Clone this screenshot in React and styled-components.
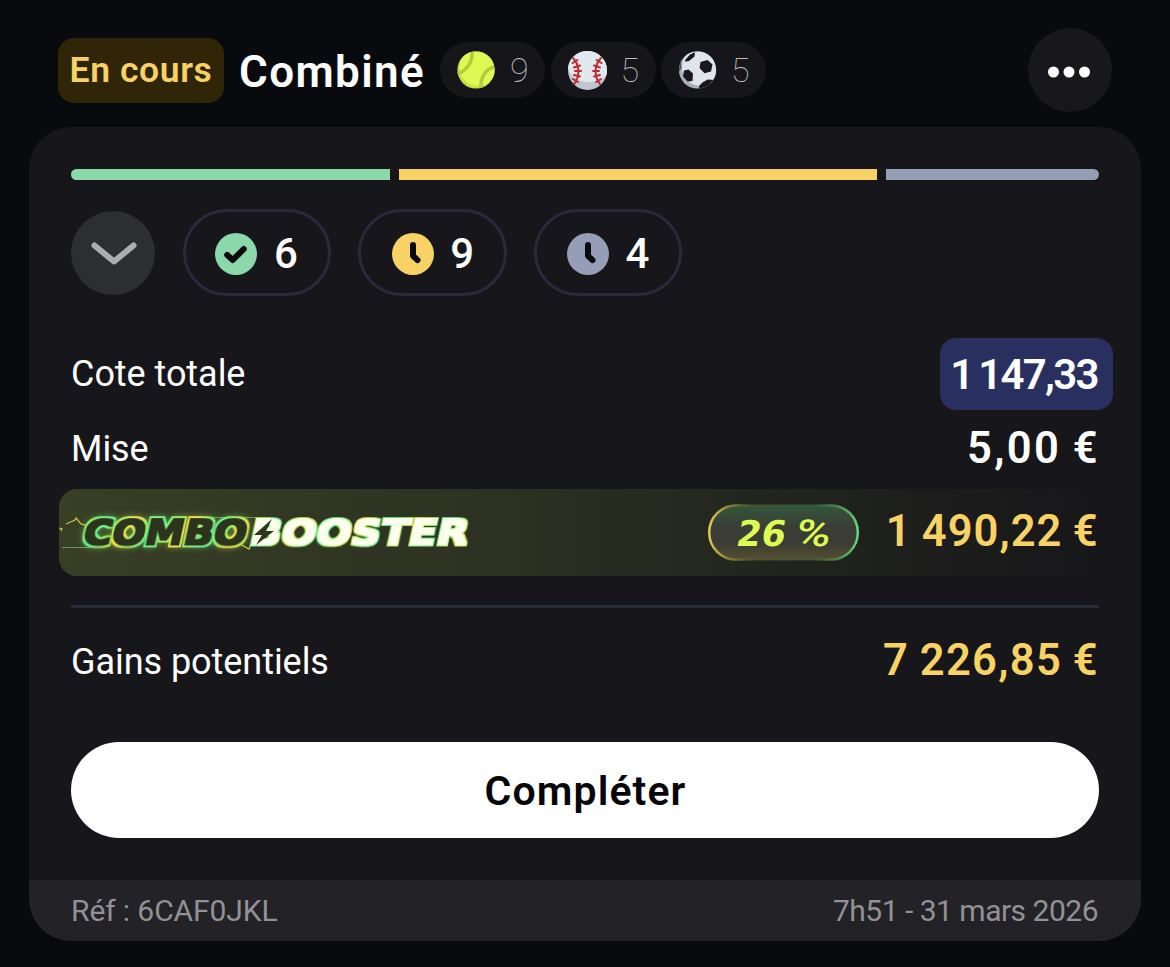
import React from "react";
import styled, { createGlobalStyle } from "styled-components";

const Global = createGlobalStyle`
  *, *::before, *::after { box-sizing: border-box; }
  body { margin: 0; background: #090a0d; font-family: Roboto, "Liberation Sans", sans-serif; color: #fff; }
`;

const Page = styled.main`
  width: 1170px;
  height: 967px;
  overflow: hidden;
  padding: 28px 29px 0;
`;

const Header = styled.header`
  display: flex;
  align-items: center;
  height: 84px;
  padding: 0 29px;
  margin-bottom: 15px;
`;

const Status = styled.span`
  display: flex;
  align-items: center;
  justify-content: center;
  width: 166px;
  height: 65px;
  border-radius: 16px;
  background: #312508;
  color: #f8d264;
  font-size: 35.5px;
  font-weight: 600;
  letter-spacing: 0.6px;
  white-space: nowrap;
`;

const Title = styled.h1`
  margin: 0 0 0 15px;
  padding-top: 3px;
  width: 186px;
  font-size: 44px;
  font-weight: 600;
  line-height: 84px;
  letter-spacing: 1.4px;
  white-space: nowrap;
`;

const Sports = styled.div`
  display: flex;
  gap: 5.5px;
  margin: 0 auto 0 15px;
`;

const Sport = styled.div`
  display: flex;
  align-items: center;
  gap: 14px;
  width: 105px;
  height: 56px;
  padding-left: 16px;
  border-radius: 28px;
  background: #161519;
  color: #bcbcc0;
  font-size: 34px;
  font-weight: 100;
`;

const More = styled.button`
  display: grid;
  place-items: center;
  width: 84px;
  height: 84px;
  padding: 3px 2px 0 0;
  border: 0;
  border-radius: 50%;
  background: #18171c;
`;

const Card = styled.section`
  display: flex;
  flex-direction: column;
  width: 1112px;
  height: 814px;
  border-radius: 42px;
  background: #17161a;
  overflow: hidden;
`;

const Content = styled.div`
  flex: 1;
  padding: 42px 42px 0;
`;

const Progress = styled.div`
  display: flex;
  gap: 9px;
  height: 11px;
  border-radius: 6px;
  overflow: hidden;
`;

const Segment = styled.div`
  flex: ${(p) => p.$share} 0 0;
  background: ${(p) => p.$color};
`;

const Counters = styled.div`
  display: flex;
  align-items: center;
  margin-top: 29px;
  gap: 27px;
`;

const Toggle = styled.button`
  display: grid;
  place-items: center;
  width: 84px;
  height: 84px;
  margin-right: 1px;
  padding: 2px 0 0 1px;
  border: 0;
  border-radius: 50%;
  background: #2d2e32;
`;

const Counter = styled.div`
  display: flex;
  align-items: center;
  gap: ${(p) => p.$gap || 17}px;
  width: 148.3px;
  height: 87px;
  padding: 2px 0 0 ${(p) => p.$inset || 29}px;
  border: 3px solid #2a2b3a;
  border-radius: 44px;
  font-size: 42px;
  font-weight: 480;
`;

const Line = styled.div`
  display: flex;
  align-items: center;
  justify-content: space-between;
  height: ${(p) => p.$height}px;
  margin-top: ${(p) => p.$top || 0}px;
`;

const Label = styled.span`
  padding-top: ${(p) => p.$drop || 0}px;
  font-size: 36px;
  font-weight: 380;
  letter-spacing: -0.05px;
  white-space: nowrap;
`;

const Amount = styled.span`
  color: ${(p) => (p.$gold ? "#f8d264" : "#fff")};
  font-size: 43.5px;
  font-weight: 580;
  letter-spacing: ${(p) => p.$tracking || 0}px;
  word-spacing: -1.5px;
  margin-right: ${(p) => 1.5 - (p.$tracking || 0)}px;
  padding-bottom: ${(p) => p.$lift || 0}px;
  white-space: nowrap;
`;

const Odds = styled.span`
  display: flex;
  align-items: center;
  justify-content: center;
  width: 173px;
  height: 72px;
  margin-right: -14px;
  padding: 1px 5px 0 0;
  border-radius: 16px;
  background: #29305f;
  font-size: 42px;
  font-weight: 580;
  letter-spacing: -1.7px;
  word-spacing: -3px;
  white-space: nowrap;
`;

const Boost = styled.div`
  display: flex;
  align-items: center;
  height: 87px;
  margin: 3px 0 0 -12px;
  border-radius: 18px;
  background: linear-gradient(90deg, #383f25 0%, #2b3021 45%, #22251e 68%, #17161a 100%);
`;

const Percent = styled.span`
  display: flex;
  margin-left: auto;
  width: 178px;
`;

const BoostAmount = styled.span`
  display: flex;
  justify-content: flex-end;
  width: 213px;
`;

const Divider = styled.hr`
  height: 3px;
  margin: 29px 0 0;
  border: 0;
  background: #292a39;
`;

const Complete = styled.button`
  display: block;
  width: 100%;
  height: 96px;
  margin-top: 36px;
  padding: 2px 0 0 1px;
  border: 0;
  border-radius: 48px;
  background: #fff;
  color: #060608;
  font-family: inherit;
  font-size: 41px;
  font-weight: 600;
  letter-spacing: 1.1px;
`;

const Footer = styled.footer`
  display: flex;
  align-items: center;
  justify-content: space-between;
  height: 61px;
  padding: 0 43px 0 42px;
  background: #232226;
  color: #929195;
  font-size: 30px;
  font-weight: 380;
`;

const FootText = styled.span`
  letter-spacing: ${(p) => p.$tracking || 0}px;
`;

const TennisBall = () => (
  <svg width="40" height="40" viewBox="0 0 40 40">
    <clipPath id="tennis"><circle cx="20" cy="20" r="18.6" /></clipPath>
    <g clipPath="url(#tennis)">
      <rect width="40" height="40" fill="#c9e044" />
      <circle cx="22" cy="17.5" r="18.5" fill="#def953" />
      <path d="M16 0c1 12-5 21-15 24M39 17C30 18 24 27 25 40" fill="none" stroke="#b4cb3c" strokeWidth="3.6" />
    </g>
  </svg>
);

const Baseball = () => (
  <svg width="40" height="40" viewBox="0 0 40 40">
    <circle cx="20.5" cy="20.5" r="19.5" fill="#bfc6cf" />
    <path d="M40 20.5C40 9.500 31 1 20.500 1 10 1 2 8 1 17.500 3 27 11 32 21 32c8 0 15-2 18.500-7 .4-2 .5-3 .5-4.500z" fill="#e1e8ee" />
    <g fill="none" stroke="#bd2a30" strokeWidth="2" strokeLinecap="round">
      <path d="M6 8c7 7 7 19 1 26M34 8c-7 7-7 19-1 26" />
      <path d="M5.500 13l5-3M7 17.500l6-2M8 21h6M7 25l6 1.500M6 29l5 3M34.500 13l-5-3M33 17.500l-6-2M26 21h6M33 25l-6 1.500M34 29l-5 3" />
    </g>
  </svg>
);

const Football = () => (
  <svg width="40" height="40" viewBox="0 0 40 40">
    <clipPath id="football"><circle cx="20.5" cy="20" r="18.6" /></clipPath>
    <g clipPath="url(#football)">
      <rect width="40" height="40" fill="#a9b0b8" />
      <ellipse cx="24" cy="17" rx="19" ry="19" fill="#dfe5eb" />
      <g fill="#18191d">
        <path d="M8.500 9.500l4.500-5 5-2.200-.5 4.200-5.500 4.500-4 .8z" />
        <path d="M23.500 12l7-2 5 4.500-1.500 7-6.500 1.800-5-5.300z" />
        <path d="M7 20.500l4.500-1 4.500 4-.5 7.500-5 .5-4.500-5z" />
        <path d="M25.500 32.500l5-3 7 .5-4 8-11 2-.5-4z" />
      </g>
      <path d="M2 15l2-3 .5 6L2 22z" fill="#555960" />
    </g>
  </svg>
);

const StateIcon = ({ color, check }) => (
  <svg width="42" height="42" viewBox="0 0 42 42">
    <circle cx="21" cy="21" r="21" fill={color} />
    <path
      d={check ? "M12.200 22l5.600 5L28.800 16" : "M21 12v10.800l4.500 4.300"}
      fill="none" stroke="#0b0a0f" strokeWidth="6" strokeLinecap="round" strokeLinejoin="round"
    />
  </svg>
);

const BoosterLogo = () => (
  <svg width="420" height="66" viewBox="59 500 420 66" fontFamily="'DejaVu Sans', sans-serif" fontWeight="700">
    <defs>
      <linearGradient id="edge" x1="0" y1="0" x2="20" y2="13" gradientUnits="userSpaceOnUse" spreadMethod="reflect">
        <stop offset="0" stopColor="#eee04a" />
        <stop offset=".4" stopColor="#9dec58" />
        <stop offset="1" stopColor="#5cf08f" />
      </linearGradient>
      <filter id="comboEdge" x="-10%" y="-50%" width="120%" height="200%" colorInterpolationFilters="sRGB">
        <feMorphology in="SourceGraphic" operator="dilate" radius="3" result="wide" />
        <feGaussianBlur in="wide" stdDeviation=".4" result="outer" />
        <feMorphology in="SourceAlpha" operator="dilate" radius="1" result="inner" />
        <feFlood floodColor="#2c341d" />
        <feComposite in2="inner" operator="in" result="body" />
        <feGaussianBlur in="wide" stdDeviation="3" result="blur" />
        <feComponentTransfer in="blur" result="glow"><feFuncA type="linear" slope=".45" /></feComponentTransfer>
        <feMerge><feMergeNode in="glow" /><feMergeNode in="outer" /><feMergeNode in="body" /></feMerge>
      </filter>
      <filter id="boosterEdge" x="-10%" y="-50%" width="120%" height="200%" colorInterpolationFilters="sRGB">
        <feMorphology in="SourceGraphic" operator="dilate" radius="2" result="outer" />
        <feMorphology in="SourceAlpha" operator="dilate" radius="1" result="inner" />
        <feFlood floodColor="#fbffec" />
        <feComposite in2="inner" operator="in" result="body" />
        <feMerge><feMergeNode in="outer" /><feMergeNode in="body" /></feMerge>
      </filter>
    </defs>
    <path d="M59 528l3 1-1 2M66 524l9-4 1-2 5 6 4 1M240 544l9 5 5-12" fill="none" stroke="#c3c245" strokeWidth="1.300" />
    <path d="M62 547.500h28M190 517.500h66" fill="none" stroke="#5c9a4c" strokeWidth="1" />
    <g transform="translate(0 545.500) skewX(-12)">
      <text x="81.500" y="-.5" fontSize="35.500" textLength="163" lengthAdjust="spacingAndGlyphs" fill="url(#edge)" filter="url(#comboEdge)">COMBO</text>
      <text x="248" y="-1" fontSize="34" textLength="218" lengthAdjust="spacingAndGlyphs" fill="url(#edge)" filter="url(#boosterEdge)">BOOSTER</text>
    </g>
    <path d="M272 519l-18 16h8l-6 10 18-14h-8z" fill="#2d3620" />
  </svg>
);

const PercentBadge = () => (
  <svg width="151" height="57" viewBox="0 0 151 57" fontFamily="'DejaVu Sans', sans-serif" fontWeight="700">
    <defs>
      <linearGradient id="pillFill" x1="0" y1="0" x2="0" y2="1">
        <stop offset="0" stopColor="#34573a" /><stop offset=".4" stopColor="#3b3d37" />
        <stop offset=".7" stopColor="#3b3c34" /><stop offset="1" stopColor="#55502f" />
      </linearGradient>
      <linearGradient id="pillEdge" x1="0" y1="0" x2="1" y2="0">
        <stop offset="0" stopColor="#e8cd50" /><stop offset=".3" stopColor="#69632f" stopOpacity=".3" />
        <stop offset=".7" stopColor="#3c7548" stopOpacity=".3" /><stop offset="1" stopColor="#68dc7d" />
      </linearGradient>
    </defs>
    <rect x="1.200" y="1.200" width="148.600" height="54.600" rx="27.300" fill="url(#pillFill)" stroke="url(#pillEdge)" strokeWidth="2.400" />
    <g transform="translate(0 42) skewX(-10)" fill="#dcfb53">
      <text x="27" y="0" fontSize="35.500" textLength="49" lengthAdjust="spacingAndGlyphs">26</text>
      <text x="86" y="0" fontSize="37" fontWeight="500" fontFamily="Roboto, sans-serif" textLength="35" lengthAdjust="spacingAndGlyphs">%</text>
    </g>
  </svg>
);

export default function App() {
  return (
    <Page>
      <Global />
      <Header>
        <Status>En cours</Status>
        <Title>Combiné</Title>
        <Sports>
          <Sport><TennisBall />9</Sport>
          <Sport><Baseball />5</Sport>
          <Sport><Football />5</Sport>
        </Sports>
        <More aria-label="Options">
          <svg width="44" height="12" viewBox="0 0 44 12" fill="#fff">
            <circle cx="6.500" cy="6" r="5.500" /><circle cx="22" cy="6" r="5.500" /><circle cx="37.500" cy="6" r="5.500" />
          </svg>
        </More>
      </Header>
      <Card>
        <Content>
          <Progress>
            <Segment $share={319} $color="#8bd9ab" />
            <Segment $share={478} $color="#f8d264" />
            <Segment $share={213} $color="#969db7" />
          </Progress>
          <Counters>
            <Toggle aria-label="Afficher">
              <svg width="48" height="26" viewBox="0 0 48 26">
                <path d="M4.500 4.500L24 20.500l19.500-16" fill="none" stroke="#adadb1" strokeWidth="6" strokeLinecap="round" strokeLinejoin="round" />
              </svg>
            </Toggle>
            <Counter><StateIcon color="#8bd9ab" check />6</Counter>
            <Counter $inset={31} $gap={16}><StateIcon color="#f8d264" />9</Counter>
            <Counter $inset={30}><StateIcon color="#969db7" />4</Counter>
          </Counters>
          <Line $height={72} $top={42}><Label>Cote totale</Label><Odds>1 147,33</Odds></Line>
          <Line $height={76}><Label $drop={2}>Mise</Label><Amount $tracking={2.3}>5,00 €</Amount></Line>
          <Boost>
            <BoosterLogo />
            <Percent><PercentBadge /></Percent>
            <BoostAmount><Amount $gold $tracking={1} $lift={3}>1 490,22 €</Amount></BoostAmount>
          </Boost>
          <Divider />
          <Line $height={89} $top={9}><Label>Gains potentiels</Label><Amount $gold $tracking={1.3} $lift={3}>7 226,85 €</Amount></Line>
          <Complete>Compléter</Complete>
        </Content>
        <Footer><FootText $tracking={-0.1}>Réf : 6CAF0JKL</FootText><FootText $tracking={-0.5}>7h51 - 31 mars 2026</FootText></Footer>
      </Card>
    </Page>
  );
}
